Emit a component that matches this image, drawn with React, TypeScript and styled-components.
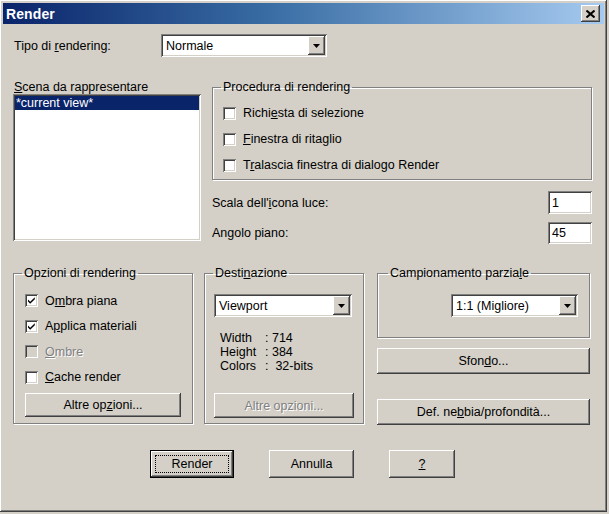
import React from 'react';
import styled, { createGlobalStyle, css } from 'styled-components';

const GlobalStyle = createGlobalStyle`
  html, body {
    margin: 0;
    padding: 0;
    background: #d4d0c8;
  }
  body {
    font-family: "Liberation Sans", Arial, sans-serif;
    font-size: 12.5px;
    color: #000;
  }
`;

const raised = css`
  box-shadow: inset -1px -1px 0 #404040, inset 1px 1px 0 #ffffff,
    inset -2px -2px 0 #808080, inset 2px 2px 0 #d4d0c8;
`;

const sunken = css`
  box-shadow: inset 1px 1px 0 #808080, inset -1px -1px 0 #ffffff,
    inset 2px 2px 0 #404040, inset -2px -2px 0 #d4d0c8;
`;

const Window = styled.div`
  box-sizing: border-box;
  width: 607px;
  height: 512px;
  padding: 3px;
  background: #d4d0c8;
  ${raised};
`;

const TitleBar = styled.div`
  height: 21px;
  display: flex;
  align-items: center;
  justify-content: space-between;
  padding: 0 4px 0 3px;
  background: linear-gradient(to right, #0a246a 0%, #3a6ea5 45%, #a6caf0 100%);
`;

const Title = styled.span`
  color: #fff;
  font-weight: bold;
  font-size: 14px;
  letter-spacing: 0.1px;
`;

const CloseButton = styled.div`
  box-sizing: border-box;
  width: 19px;
  height: 17px;
  background: #d4d0c8;
  display: flex;
  align-items: center;
  justify-content: center;
  ${raised};
`;

const Body = styled.div`
  padding: 10px 12px 0 10px;
`;

const TopRow = styled.div`
  display: flex;
  align-items: center;
  height: 23px;
`;

const FieldLabel = styled.span<{ $width?: number }>`
  box-sizing: border-box;
  padding-left: 1px;
  ${(p) => (p.$width ? `width: ${p.$width}px;` : 'flex: 1;')}
`;

const SelectBox = styled.div<{ $width: number; $height?: number }>`
  box-sizing: border-box;
  width: ${(p) => p.$width}px;
  height: ${(p) => p.$height ?? 23}px;
  background: #fff;
  padding: 2px;
  display: flex;
  align-items: stretch;
  ${sunken};
`;

const SelectValue = styled.span`
  flex: 1;
  display: flex;
  align-items: center;
  padding-left: 3px;
`;

const DropButton = styled.span`
  box-sizing: border-box;
  width: 17px;
  background: #d4d0c8;
  display: flex;
  align-items: center;
  justify-content: center;
  ${raised};
`;

const MiddleRow = styled.div`
  display: flex;
  gap: 11px;
  margin-top: 23px;
  height: 164px;
`;

const SceneColumn = styled.div`
  width: 188px;
  display: flex;
  flex-direction: column;
`;

const ColumnLabel = styled.div`
  height: 14px;
  line-height: 14px;
  padding-left: 1px;
`;

const ListBox = styled.div`
  box-sizing: border-box;
  height: 147px;
  background: #fff;
  padding: 2px;
  ${sunken};
`;

const ListItem = styled.div<{ $selected?: boolean }>`
  height: 14px;
  line-height: 14px;
  padding-left: 1px;
  background: ${(p) => (p.$selected ? '#0a246a' : 'transparent')};
  color: ${(p) => (p.$selected ? '#fff' : '#000')};
`;

const RightColumn = styled.div`
  flex: 1;
  display: flex;
  flex-direction: column;
`;

const Group = styled.fieldset<{ $height: number; $pad: number }>`
  box-sizing: border-box;
  margin: 0;
  min-width: 0;
  height: ${(p) => p.$height}px;
  padding: 0 ${(p) => p.$pad}px;
  border: 1px solid #808080;
  box-shadow: 1px 1px 0 #ffffff, inset 1px 1px 0 #ffffff;
  display: flex;
  flex-direction: column;
`;

const Legend = styled.legend<{ $offset: number }>`
  padding: 0 2px;
  margin-left: ${(p) => p.$offset}px;
  line-height: 15px;
`;

const Spacer = styled.div<{ $height: number }>`
  flex: none;
  height: ${(p) => p.$height}px;
`;

const CheckRow = styled.div<{ $height: number; $disabled?: boolean }>`
  height: ${(p) => p.$height}px;
  display: flex;
  align-items: center;
  gap: 7px;
  color: ${(p) => (p.$disabled ? '#808080' : '#000')};
  text-shadow: ${(p) => (p.$disabled ? '1px 1px 0 #ffffff' : 'none')};
`;

const CheckBox = styled.span<{ $disabled?: boolean }>`
  box-sizing: border-box;
  width: 13px;
  height: 13px;
  flex: none;
  background: ${(p) => (p.$disabled ? '#d4d0c8' : '#fff')};
  display: flex;
  ${sunken};
`;

const NumberRow = styled.div<{ $height: number; $top: number }>`
  display: flex;
  align-items: center;
  justify-content: space-between;
  height: ${(p) => p.$height}px;
  margin-top: ${(p) => p.$top}px;
`;

const NumberInput = styled.div`
  box-sizing: border-box;
  width: 44px;
  height: 100%;
  background: #fff;
  padding: 0 4px;
  display: flex;
  align-items: center;
  ${sunken};
`;

const BottomRow = styled.div`
  display: grid;
  grid-template-columns: 180px 160px 215px;
  column-gap: 11px;
  margin-top: 22px;
  height: 159px;
  & > :nth-child(3) {
    margin-left: 2px;
  }
`;

const StackColumn = styled.div`
  display: flex;
  flex-direction: column;
`;

const RightAligned = styled.div`
  display: flex;
  justify-content: flex-end;
`;

const PushButton = styled.div<{ $width?: number; $height: number; $disabled?: boolean }>`
  box-sizing: border-box;
  ${(p) => (p.$width ? `width: ${p.$width}px;` : '')}
  height: ${(p) => p.$height}px;
  flex: none;
  display: flex;
  align-items: center;
  justify-content: center;
  background: #d4d0c8;
  color: ${(p) => (p.$disabled ? '#808080' : '#000')};
  text-shadow: ${(p) => (p.$disabled ? '1px 1px 0 #ffffff' : 'none')};
  ${raised};
`;

const DefaultButton = styled(PushButton)`
  box-shadow: inset 0 0 0 1px #000, inset -2px -2px 0 #404040,
    inset 2px 2px 0 #ffffff, inset -3px -3px 0 #808080;
  position: relative;
  &::after {
    content: '';
    position: absolute;
    inset: 5px;
    border: 1px dotted #000;
  }
`;

const InfoGrid = styled.div`
  display: grid;
  grid-template-columns: 45px auto;
  line-height: 14px;
  margin: 14px 0 0 6px;
  white-space: pre;
`;

const ButtonRow = styled.div`
  display: flex;
  justify-content: center;
  gap: 35px;
  margin-top: 25px;
`;

const Arrow = () => (
  <svg width="7" height="4" viewBox="0 0 7 4">
    <path d="M0 0h7L3.5 4z" fill="#000" />
  </svg>
);

const Check = () => (
  <svg width="9" height="9" viewBox="0 0 9 9" style={{ margin: 'auto' }}>
    <path d="M1 3.5l2.2 2.3L7.8 1.2v2L3.2 7.8 1 5.5z" fill="#000" />
  </svg>
);

const Select = ({ width, value }: { width: number; value: string }) => (
  <SelectBox $width={width}>
    <SelectValue>{value}</SelectValue>
    <DropButton>
      <Arrow />
    </DropButton>
  </SelectBox>
);

const Option = ({
  children,
  checked,
  disabled,
  height,
}: {
  children: React.ReactNode;
  checked?: boolean;
  disabled?: boolean;
  height: number;
}) => (
  <CheckRow $height={height} $disabled={disabled}>
    <CheckBox $disabled={disabled}>{checked && <Check />}</CheckBox>
    <span>{children}</span>
  </CheckRow>
);

export default function App() {
  return (
    <>
      <GlobalStyle />
      <Window>
        <TitleBar>
          <Title>Render</Title>
          <CloseButton>
            <svg width="9" height="8" viewBox="0 0 9 8">
              <path d="M0.5 0.5l8 7M8.5 0.5l-8 7" stroke="#000" strokeWidth="2" />
            </svg>
          </CloseButton>
        </TitleBar>
        <Body>
          <TopRow>
            <FieldLabel $width={148}>
              Tipo di <u>r</u>endering:
            </FieldLabel>
            <Select width={166} value="Normale" />
          </TopRow>

          <MiddleRow>
            <SceneColumn>
              <ColumnLabel>
                <u>S</u>cena da rappresentare
              </ColumnLabel>
              <ListBox>
                <ListItem $selected>*current view*</ListItem>
              </ListBox>
            </SceneColumn>

            <RightColumn>
              <Group $height={100} $pad={10}>
                <Legend $offset={-2}>Procedura di rendering</Legend>
                <Spacer $height={5} />
                <Option height={26}>
                  Richi<u>e</u>sta di selezione
                </Option>
                <Option height={26}>
                  <u>F</u>inestra di ritaglio
                </Option>
                <Option height={26}>
                  T<u>r</u>alascia finestra di dialogo Render
                </Option>
              </Group>
              <NumberRow $height={23} $top={11}>
                <span>
                  Scala dell'<u>i</u>cona luce:
                </span>
                <NumberInput>1</NumberInput>
              </NumberRow>
              <NumberRow $height={22} $top={8}>
                <span>Angolo piano:</span>
                <NumberInput>45</NumberInput>
              </NumberRow>
            </RightColumn>
          </MiddleRow>

          <BottomRow>
            <Group $height={158} $pad={11}>
              <Legend $offset={-3}>Opzioni di rendering</Legend>
              <Spacer $height={7} />
              <Option height={25.5} checked>
                O<u>m</u>bra piana
              </Option>
              <Option height={25.5} checked>
                A<u>p</u>plica materiali
              </Option>
              <Option height={25.5} disabled>
                <u>O</u>mbre
              </Option>
              <Option height={25.5}>
                <u>C</u>ache render
              </Option>
              <Spacer $height={3} />
              <PushButton $height={24}>
                Altre op<u>z</u>ioni...
              </PushButton>
            </Group>

            <Group $height={158} $pad={9}>
              <Legend $offset={-1}>
                Desti<u>n</u>azione
              </Legend>
              <Spacer $height={13} />
              <Select width={138} value="Viewport" />
              <InfoGrid>
                <span>Width</span>
                <span>: 714</span>
                <span>Height</span>
                <span>: 384</span>
                <span>Colors</span>
                <span>:  32-bits</span>
              </InfoGrid>
              <Spacer $height={25} style={{ flex: 1 }} />
              <PushButton $height={25} $disabled>
                Altre opzioni...
              </PushButton>
              <Spacer $height={5} />
            </Group>

            <StackColumn>
              <Group $height={72} $pad={11}>
                <Legend $offset={-1}>
                  Campionamento parzia<u>l</u>e
                </Legend>
                <Spacer $height={13} />
                <RightAligned>
                  <Select width={127} value="1:1 (Migliore)" />
                </RightAligned>
              </Group>
              <Spacer $height={10} />
              <PushButton $height={26}>
                Sfon<u>d</u>o...
              </PushButton>
              <Spacer $height={25} />
              <PushButton $height={26}>
                Def. ne<u>b</u>bia/profondità...
              </PushButton>
            </StackColumn>
          </BottomRow>

          <ButtonRow>
            <DefaultButton $width={84} $height={28}>
              Render
            </DefaultButton>
            <PushButton $width={85} $height={28}>
              Annulla
            </PushButton>
            <PushButton $width={66} $height={28}>
              <u>?</u>
            </PushButton>
          </ButtonRow>
        </Body>
      </Window>
    </>
  );
}
